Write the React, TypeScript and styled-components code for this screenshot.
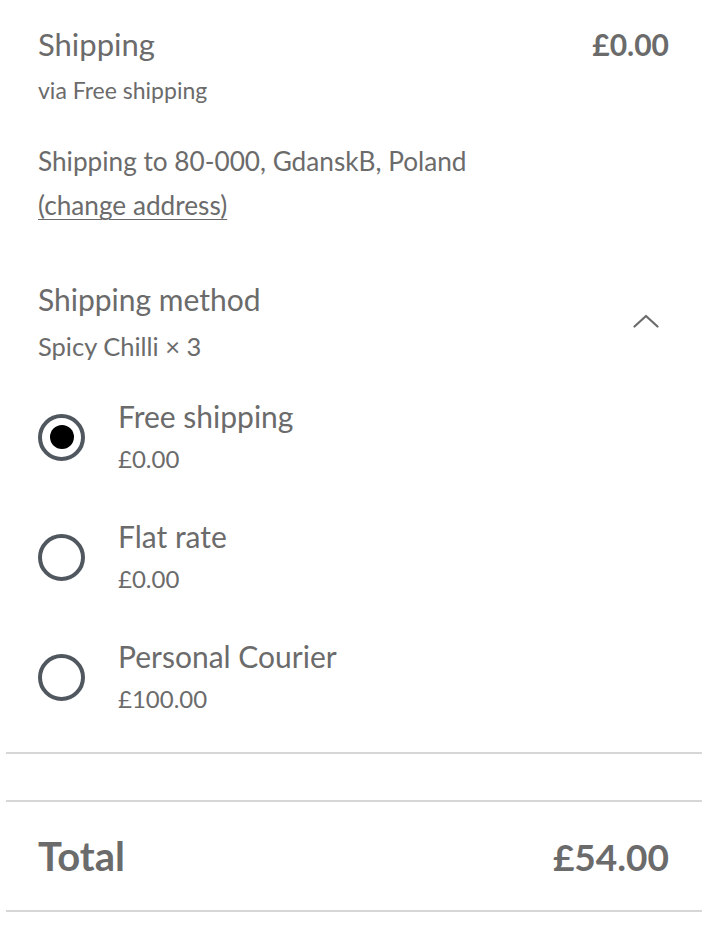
import styled, { createGlobalStyle } from "styled-components";

const GlobalStyle = createGlobalStyle`
  body {
    margin: 0;
    background: #ffffff;
    font-family: 'Lato', 'Liberation Sans', sans-serif;
    color: #6b6b6b;
  }
`;

const options = [
    { label: "Free shipping", price: "£0.00", checked: true },
    { label: "Flat rate", price: "£0.00", checked: false },
    { label: "Personal Courier", price: "£100.00", checked: false },
];

export default function App() {
    return (
        <>
            <GlobalStyle/>
            <Page>
                <Section>
                    <HeaderRow>
                        <Title>Shipping</Title>
                        <Amount>£0.00</Amount>
                    </HeaderRow>
                    <Via>via Free shipping</Via>

                    <Address>
                        Shipping to 80-000, GdanskB, Poland
                        <br/>
                        <ChangeLink href="#">(change address)</ChangeLink>
                    </Address>

                    <MethodHead>
                        <div>
                            <MethodTitle>Shipping method</MethodTitle>
                            <MethodItems>Spicy Chilli × 3</MethodItems>
                        </div>
                        <Chevron width="26" height="14" viewBox="0 0 26 14">
                            <path d="M1.5 12.5 L13 2 L24.5 12.5" fill="none" stroke="#6b6b6b" strokeWidth="2.2"
                                  strokeLinecap="round" strokeLinejoin="round"/>
                        </Chevron>
                    </MethodHead>

                    <OptionList>
                        {options.map((o) => (
                            <Option key={o.label}>
                                <Radio $checked={o.checked}/>
                                <div>
                                    <OptionLabel>{o.label}</OptionLabel>
                                    <OptionPrice>{o.price}</OptionPrice>
                                </div>
                            </Option>
                        ))}
                    </OptionList>
                </Section>

                <EmptyRow/>
                <TotalRow>
                    <TotalText>Total</TotalText>
                    <TotalText $tight>£54.00</TotalText>
                </TotalRow>
            </Page>
        </>
    );
}

const Page = styled.div`
  width: 696px;
  margin-left: 6px;
  padding-top: 24px;
`

const Section = styled.div`
  padding: 0 33px 32px 32px;
`

const HeaderRow = styled.div`
  display: flex;
  justify-content: space-between;
  align-items: center;
  height: 40px;
`

const Title = styled.span`
  font-size: 31px;
  line-height: 40px;
`

const Amount = styled.span`
  font-size: 30px;
  font-weight: 700;
  line-height: 40px;
`

const Via = styled.div`
  font-size: 23px;
  line-height: 53px;
`

const Address = styled.div`
  margin-top: 22px;
  font-size: 26.2px;
  line-height: 44px;
`

const ChangeLink = styled.a`
  color: inherit;
  text-decoration: underline;
  text-underline-offset: 4px;
  text-decoration-thickness: 1px;
`

const MethodHead = styled.div`
  margin-top: 50px;
  display: flex;
  justify-content: space-between;
  align-items: center;
`

const MethodTitle = styled.div`
  font-size: 30px;
  line-height: 45px;
`

const MethodItems = styled.div`
  font-size: 25.5px;
  line-height: 48px;
`

const Chevron = styled.svg`
  margin-right: 10px;
  margin-top: -6px;
`

const OptionList = styled.div`
  margin-top: 26px;
  display: flex;
  flex-direction: column;
  gap: 36px;
`

const Option = styled.div`
  display: flex;
  align-items: center;
  gap: 33px;
`

const Radio = styled.span<{ $checked: boolean }>`
  box-sizing: border-box;
  flex: none;
  width: 47px;
  height: 47px;
  border-radius: 50%;
  border: 4px solid #50575e;
  display: flex;
  align-items: center;
  justify-content: center;
  margin-top: -2px;

  &::after {
    content: '';
    display: ${p => p.$checked ? 'block' : 'none'};
    width: 24px;
    height: 24px;
    border-radius: 50%;
    background: #000;
  }
`

const OptionLabel = styled.div`
  font-size: 30px;
  line-height: 41px;
`

const OptionPrice = styled.div`
  font-size: 24px;
  line-height: 43px;
`

const EmptyRow = styled.div`
  height: 46px;
  border-top: 2px solid #d6d6d6;
`

const TotalRow = styled.div`
  display: flex;
  justify-content: space-between;
  align-items: center;
  height: 108px;
  padding: 0 33px 0 32px;
  border-top: 2px solid #d6d6d6;
  border-bottom: 2px solid #d6d6d6;
`

const TotalText = styled.span<{ $tight?: boolean }>`
  font-size: ${p => p.$tight ? '37px' : '40px'};
  font-weight: 700;
`
